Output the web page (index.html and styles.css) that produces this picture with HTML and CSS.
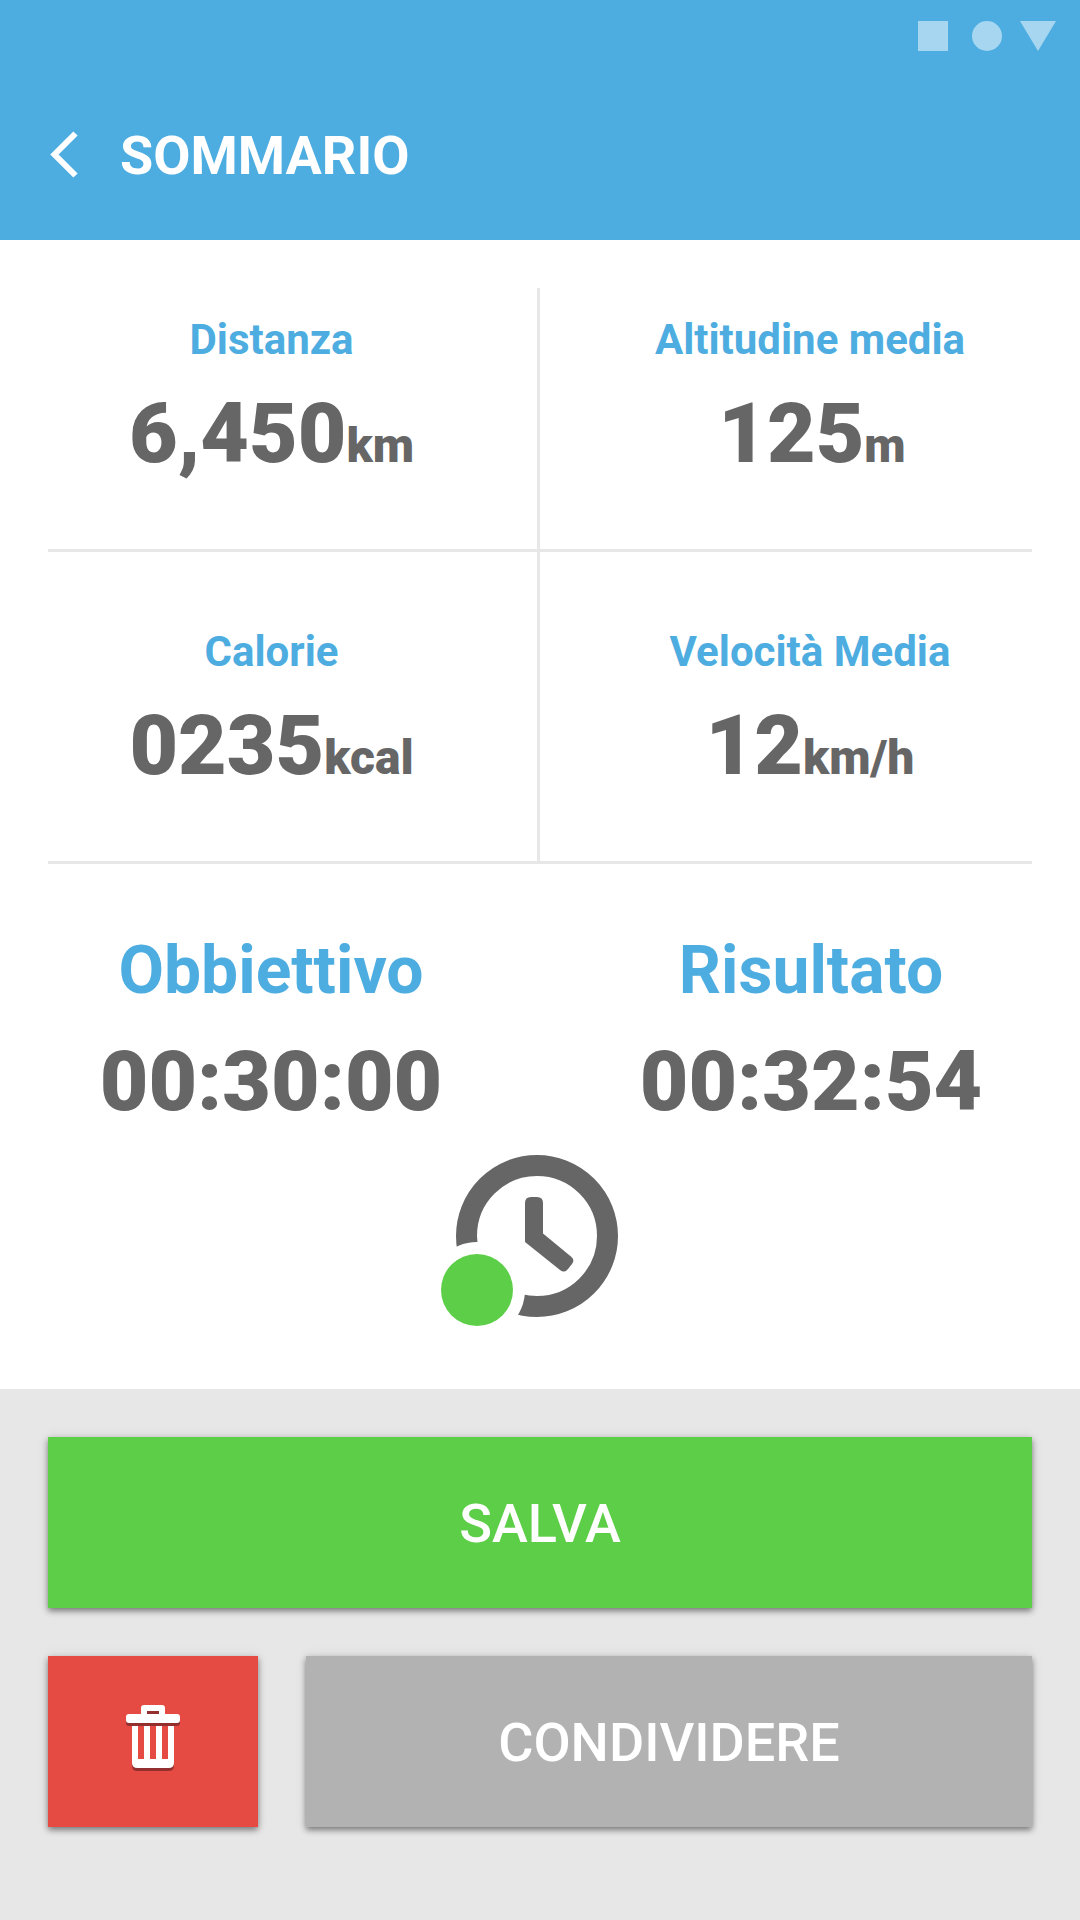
FILE: index.html
```
<!DOCTYPE html>
<html lang="it">
<head>
	<title>Sommario</title>
	<meta charset="UTF-8">
	<link rel="stylesheet" href="styles.css">
</head>
<body>
	<header class="header">
		<div class="status-bar">
			<svg width="138" height="30" viewBox="0 0 138 30">
				<rect width="30" height="30"/>
				<circle cx="69" cy="15" r="15"/>
				<path d="M102 0h36l-18 30z"/>
			</svg>
		</div>
		<div class="toolbar">
			<svg class="back-icon" width="30" height="48" viewBox="0 0 30 48">
				<path d="M25.500 2.500 4.500 23.500l21 21"/>
			</svg>
			<h1>SOMMARIO</h1>
		</div>
	</header>

	<main class="summary">
		<div class="stats">
			<div class="stat">
				<h2>Distanza</h2>
				<p>6,450<span>km</span></p>
			</div>
			<div class="stat">
				<h2>Altitudine media</h2>
				<p class="altitude">125<span>m</span></p>
			</div>
			<div class="stat">
				<h2>Calorie</h2>
				<p>0235<span>kcal</span></p>
			</div>
			<div class="stat">
				<h2>Velocità Media</h2>
				<p>12<span>km/h</span></p>
			</div>
		</div>
		<div class="times">
			<div class="time">
				<h2>Obbiettivo</h2>
				<p>00:30:00</p>
			</div>
			<div class="time">
				<h2>Risultato</h2>
				<p>00:32:54</p>
			</div>
		</div>
		<svg class="clock" width="198" height="180" viewBox="0 0 198 180">
			<circle class="clock-ring" cx="96" cy="87" r="70.5"/>
			<path class="clock-hands" d="M84 54q0-6 6-6h6q6 0 6 6v30.500l28.500 23.500q3.500 3 .5 7l-4 5q-3.500 4.500-8 1L84 93z"/>
			<circle class="clock-gap" cx="36" cy="141" r="48"/>
			<circle class="clock-dot" cx="36" cy="141" r="36"/>
		</svg>
	</main>

	<footer class="actions">
		<button class="btn btn-save">SALVA</button>
		<button class="btn btn-delete" aria-label="Elimina">
			<svg class="trash" width="54" height="66" viewBox="0 0 54 66">
				<path fill-rule="evenodd" d="M6 18h42v39.500q0 5.500-5.500 5.500h-31Q6 63 6 57.500zM12 18v36h6V18zM24 18v36h6V18zM36 18v36h6V18z"/>
				<path fill-rule="evenodd" d="M15 9V3q0-3 3-3h18q3 0 3 3v6h12q3 0 3 3v3q0 3-3 3H3q-3 0-3-3v-3q0-3 3-3zM21 6v3h12V6z"/>
			</svg>
		</button>
		<button class="btn btn-share">CONDIVIDERE</button>
	</footer>
</body>
</html>
```
FILE: styles.css
```
* {
	box-sizing: border-box;
}

body {
	margin: 0;
	min-height: 1920px;
	display: flex;
	flex-direction: column;
	background-color: #fff;
	font-family: Roboto, sans-serif;
}

h1, h2, p {
	margin: 0;
}

svg {
	display: block;
}

.header {
	height: 240px;
	background-color: #4eade0;
	color: #fff;
}

.status-bar {
	display: flex;
	justify-content: flex-end;
	height: 72px;
	padding: 21px 24px 0 0;
}

.status-bar svg {
	fill: #a7d6f0;
}

.toolbar {
	display: flex;
	align-items: center;
	height: 168px;
	padding: 0 0 3px 50px;
}

.toolbar h1 {
	margin-left: 40px;
	padding-top: 2px;
	font-size: 54px;
	font-weight: 700;
	line-height: 64px;
}

.back-icon {
	fill: none;
	stroke: #fff;
	stroke-width: 6;
}

.summary {
	height: 1149px;
	padding-top: 48px;
}

.stats {
	display: grid;
	grid-template-columns: 489px 3px 492px;
	grid-template-rows: 261px 3px 309px 3px;
	margin: 0 48px;
	background-color: #e7e7e7;
}

.stat {
	grid-column: 1;
	padding: 27px 0 0 0;
	background-color: #fff;
	text-align: center;
}

.stat:nth-child(odd) {
	padding-right: 42px;
}

.stat:nth-child(even) {
	grid-column: 3;
	padding-left: 48px;
}

.stat:nth-child(n+3) {
	grid-row: 3;
	padding-top: 75px;
}

.stat h2 {
	color: #4eade0;
	font-size: 42px;
	font-weight: 700;
	line-height: 50px;
}

.stat p,
.time p {
	color: #666;
	font-size: 84px;
	font-weight: 900;
	line-height: 98px;
}

.stat p {
	margin-top: 20px;
}

.stat .altitude {
	padding-left: 4px;
}

.stat span {
	font-size: 48px;
}

.times {
	display: flex;
	padding-top: 68px;
	padding-left: 1px;
	text-align: center;
}

.time {
	width: 540px;
	flex: none;
}

.time h2 {
	color: #4eade0;
	font-size: 66px;
	font-weight: 700;
	line-height: 78px;
}

.time p {
	margin-top: 23px;
}

.clock {
	margin: 18px 0 0 441px;
}

.clock-ring {
	fill: none;
	stroke: #666;
	stroke-width: 21;
}

.clock-hands {
	fill: #666;
}

.clock-gap {
	fill: #fff;
}

.clock-dot {
	fill: #5dce47;
}

.actions {
	display: grid;
	flex: 1;
	grid-template-columns: 210px 1fr;
	grid-template-rows: 171px 171px;
	gap: 48px;
	padding: 48px;
	background-color: #e7e7e7;
}

.btn {
	display: flex;
	align-items: center;
	justify-content: center;
	padding: 2px 0 0;
	border: 0;
	box-shadow: 0 0 12px rgba(0, 0, 0, .08), 0 3px 6px rgba(0, 0, 0, .45);
	color: #fff;
	font-family: inherit;
	font-size: 54px;
	font-weight: 500;
}

.btn-save {
	grid-column: 1 / 3;
	background-color: #5dce47;
}

.btn-delete {
	padding: 0 0 7px;
	background-color: #e54b43;
}

.btn-share {
	background-color: #b2b2b2;
}

.trash {
	fill: #fff;
}

.trash path {
	filter: drop-shadow(0 3px 0 #942f2f);
}

body {
	overflow-x: hidden;
}
```
